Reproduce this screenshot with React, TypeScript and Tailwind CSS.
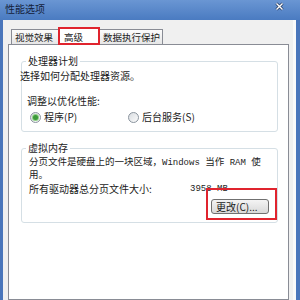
import React from "react";

const mono = "font-['Liberation_Mono',monospace] text-[9px]";

function Radio({ checked }: { checked?: boolean }) {
  return (
    <span className="w-[11px] h-[11px] shrink-0 rounded-full border border-[#8a949e] bg-linear-to-br from-[#d9dde1] to-[#fbfbfb] flex items-center justify-center">
      {checked && <span className="w-[5px] h-[5px] rounded-full bg-[#3c9a3a] ring-1 ring-[#8fcf85]" />}
    </span>
  );
}

function Tab({ label, width, active }: { label: string; width: string; active?: boolean }) {
  return (
    <div
      className={
        active
          ? `${width} h-[18px] -mb-px relative z-10 bg-white border border-b-0 border-[#898c95] pl-[4px] flex items-center whitespace-nowrap text-[9.5px]`
          : `${width} h-[15px] bg-linear-to-b from-[#fbfbfb] to-[#e6e6e6] border border-b-0 border-[#898c95] pl-[3px] flex items-center -ml-px first:ml-0 whitespace-nowrap text-[9.5px]`
      }
    >
      {label}
    </div>
  );
}

export default function App() {
  return (
    <div className="relative w-[300px] h-[300px] overflow-hidden flex flex-col bg-[#4a76bb] font-['Noto_Sans_CJK_SC',sans-serif] text-[10px] leading-[12px] text-[#1b1b1b]">
      {/* title bar */}
      <div className="h-[20px] shrink-0 flex items-center pl-[5px] pb-[3px] bg-linear-to-b from-[#6a96d3] to-[#4a7bc1]">
        <span className="text-[#14213a]">性能选项</span>
        <svg className="ml-auto mr-[16px] mb-[5px]" width="9" height="9" viewBox="0 0 9 9">
          <path d="M1.5 1.5 L7.5 7.5 M7.5 1.5 L1.5 7.5" stroke="#2b3f63" strokeWidth="3" />
          <path d="M1.5 1.5 L7.5 7.5 M7.5 1.5 L1.5 7.5" stroke="#ffffff" strokeWidth="1.4" />
        </svg>
      </div>

      {/* dialog body */}
      <div className="flex-1 flex ml-[3px] mr-[4px] bg-[#f0f0f0] border-r-[3px] border-[#fafafa] pt-[7px] pl-[5px] pr-[4px]">
        <div className="flex-1 flex flex-col">
          <div className="flex items-end pl-[3px] h-[17px]">
            <Tab label="视觉效果" width="w-[48px]" />
            <Tab label="高级" width="w-[41px]" active />
            <Tab label="数据执行保护" width="w-[64px]" />
          </div>

          <div className="flex-1 bg-white border border-[#898c95] pl-[12px] pr-[10px]">
            <fieldset className="mt-[10px] border border-[#d5dfe5] rounded-[3px] pb-[8px]">
              <legend className="ml-[4px] px-[2px] leading-[12px]">处理器计划</legend>
              <div className="mt-[3px] -ml-[2px]">选择如何分配处理器资源。</div>
              <div className="mt-[13px] pl-[5px]">调整以优化性能:</div>
              <div className="mt-[4px] pl-[8px] flex items-center">
                <Radio checked />
                <span className="ml-[3px]">程序(P)</span>
                <span className="ml-[51px] flex items-center">
                  <Radio />
                  <span className="ml-[3px]">后台服务(S)</span>
                </span>
              </div>
            </fieldset>

            <fieldset className="mt-[10px] border border-[#d5dfe5] rounded-[3px] pb-[8px]">
              <legend className="ml-[4px] px-[2px] leading-[12px]">虚拟内存</legend>
              <div className="mt-[2px] pl-[7px] leading-[11px] text-[9.5px]">
                <div className="whitespace-nowrap">
                  分页文件是硬盘上的一块区域，<span className={mono}>Windows </span>当作<span className={mono}> RAM </span>使
                </div>
                <div>用。</div>
              </div>
              <div className="mt-[3px] pl-[7px] grid grid-cols-[161px_auto] items-center">
                <span>所有驱动器总分页文件大小:</span>
                <span className={mono}>3958 MB</span>
              </div>
              <div className="mt-[4px] flex justify-end pr-[8px]">
                <button className="w-[58px] h-[15px] rounded-[3px] border border-[#707070] bg-linear-to-b from-[#f4f4f4] to-[#d9d9d9] text-[10px] leading-[12px] flex items-center pl-[4px] text-[#1b1b1b]">
                  更改(C)...
                </button>
              </div>
            </fieldset>
          </div>
        </div>
      </div>

      {/* red annotation boxes */}
      <div className="absolute left-[58px] top-[27px] w-[42px] h-[18px] border-2 border-[#e0242e] z-20 pointer-events-none" />
      <div className="absolute left-[206px] top-[188px] w-[71px] h-[32px] border-2 border-[#e0242e] z-20 pointer-events-none" />
    </div>
  );
}
